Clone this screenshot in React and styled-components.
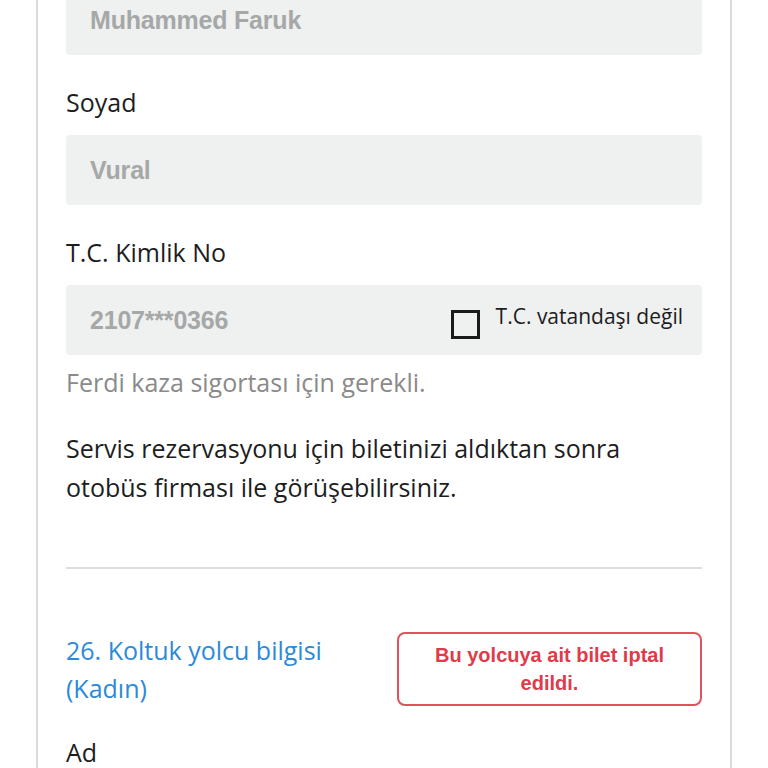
import React from "react";
import styled, {createGlobalStyle} from "styled-components";

const Global = createGlobalStyle`
    html, body {
        margin: 0;
        padding: 0;
        background: #ffffff;
        overflow: hidden;
    }
    body {
        font-family: "Open Sans", "Noto Sans", sans-serif;
        color: #1d1d1d;
    }
`

const Page = styled.div`
    height: 768px;
    overflow: hidden;
`

const Card = styled.div`
    margin: -15px 36px 0 36px;
    border-left: 2px solid #dcdcdc;
    border-right: 2px solid #dcdcdc;
    padding: 0 28px 0 28px;
    min-height: 800px;
`

const Field = styled.div`
    display: flex;
    flex-direction: column;
`

const Label = styled.div`
    font-size: 25px;
    line-height: 30px;
    margin: 32px 0 18px 0;
`

const InputBox = styled.div`
    height: 70px;
    background: #eff0f0;
    border-radius: 4px;
    display: flex;
    align-items: center;
    justify-content: space-between;
    padding: 0 19px 0 24px;
`

const Value = styled.span`
    font-family: "Liberation Sans", Arial, sans-serif;
    font-weight: 700;
    font-size: 25px;
    color: #a6a8a8;
    letter-spacing: -0.2px;
`

const CheckRow = styled.label`
    display: flex;
    align-items: flex-start;
    gap: 16px;
    font-size: 21px;
    line-height: 28px;
    color: #1d1d1d;
`

const Box = styled.span`
    width: 23px;
    height: 23px;
    border: 3px solid #1a1a1a;
    margin-top: 8px;
`

const Hint = styled.div`
    font-size: 25px;
    line-height: 34px;
    color: #8a8a8a;
    margin-top: 10px;
`

const Note = styled.p`
    font-size: 25px;
    line-height: 39px;
    margin: 30px 0 0 0;
`

const Divider = styled.hr`
    border: none;
    border-top: 2px solid #dedede;
    margin: 60px 0 0 0;
`

const SeatRow = styled.div`
    display: flex;
    justify-content: space-between;
    align-items: flex-start;
    margin-top: 62px;
`

const SeatTitle = styled.div`
    font-size: 25px;
    line-height: 38px;
    color: #2b8ad9;
`

const Alert = styled.div`
    width: 305px;
    height: 74px;
    margin-top: 1px;
    box-sizing: border-box;
    border: 2px solid #e2515e;
    border-radius: 8px;
    color: #df3b4b;
    font-family: "Liberation Sans", Arial, sans-serif;
    font-weight: 700;
    font-size: 20px;
    line-height: 28px;
    text-align: center;
    display: flex;
    align-items: center;
    justify-content: center;
    padding: 0 28px;
`

const SectionLabel = styled(Label)`
    margin-top: 30px;
`

export default function App() {
    return (
        <Page>
            <Global/>
            <Card>
                <InputBox>
                    <Value>Muhammed Faruk</Value>
                </InputBox>
                <Field>
                    <Label>Soyad</Label>
                    <InputBox>
                        <Value>Vural</Value>
                    </InputBox>
                </Field>
                <Field>
                    <Label>T.C. Kimlik No</Label>
                    <InputBox>
                        <Value>2107***0366</Value>
                        <CheckRow>
                            <Box/>
                            T.C. vatandaşı değil
                        </CheckRow>
                    </InputBox>
                    <Hint>Ferdi kaza sigortası için gerekli.</Hint>
                </Field>
                <Note>
                    Servis rezervasyonu için biletinizi aldıktan sonra<br/>
                    otobüs firması ile görüşebilirsiniz.
                </Note>
                <Divider/>
                <SeatRow>
                    <SeatTitle>26. Koltuk yolcu bilgisi<br/>(Kadın)</SeatTitle>
                    <Alert>Bu yolcuya ait bilet iptal edildi.</Alert>
                </SeatRow>
                <SectionLabel>Ad</SectionLabel>
            </Card>
        </Page>
    )
}
